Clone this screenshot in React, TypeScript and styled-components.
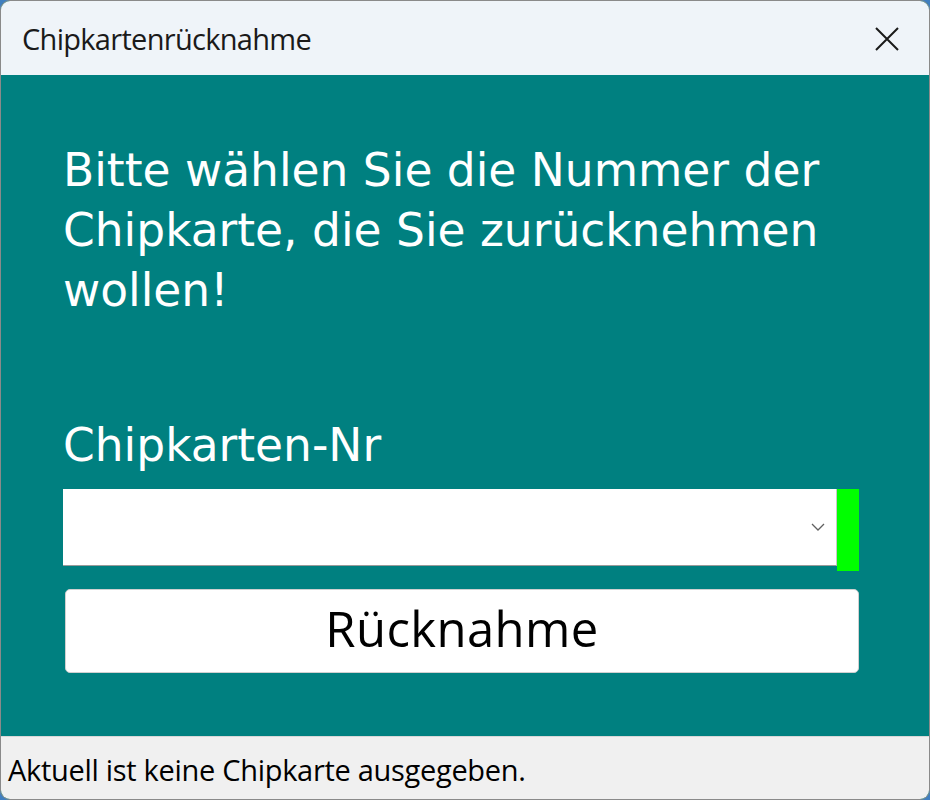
import React from 'react'
import styled, { createGlobalStyle } from 'styled-components'

const GlobalStyle = createGlobalStyle`
	html, body {
		margin: 0;
		padding: 0;
		width: 930px;
		height: 800px;
		overflow: hidden;
		background: #3f7fc0;
	}
`

function App() {
	const [selected, setSelected] = React.useState<string>('')

	return (
		<>
			<GlobalStyle />
			<Window>
				<TitleBar>
					<Title>Chipkartenrücknahme</Title>
					<CloseButton aria-label="Schließen">
						<svg width="24" height="24" viewBox="0 0 24 24">
							<path d="M1 1 L23 23 M23 1 L1 23" stroke="#1a1a1a" strokeWidth="2" fill="none" />
						</svg>
					</CloseButton>
				</TitleBar>
				<Content>
					<Prompt>Bitte wählen Sie die Nummer der Chipkarte, die Sie zurücknehmen wollen!</Prompt>
					<FieldLabel>Chipkarten-Nr</FieldLabel>
					<ComboRow>
						<Combo>
							<ComboValue>{selected}</ComboValue>
							<svg width="14" height="8" viewBox="0 0 14 8">
								<path d="M1 1 L7 7 L13 1" stroke="#606060" strokeWidth="1.3" fill="none" />
							</svg>
						</Combo>
						<StatusMark ok />
					</ComboRow>
					<ActionButton onClick={() => setSelected('')}>Rücknahme</ActionButton>
				</Content>
				<StatusBar>Aktuell ist keine Chipkarte ausgegeben.</StatusBar>
			</Window>
		</>
	)
}

const Window = styled.div`
	display: flex;
	flex-direction: column;
	width: 930px;
	height: 800px;
	box-sizing: border-box;
	border: 1px solid #8a8a8a;
	border-radius: 10px;
	overflow: hidden;
	background: #008080;
`

const TitleBar = styled.div`
	display: flex;
	align-items: center;
	justify-content: space-between;
	height: 74px;
	padding: 0 30px 0 21px;
	background: #eff4f9;
	flex-shrink: 0;
`

const Title = styled.div`
	font-family: 'Open Sans', sans-serif;
	font-size: 29px;
	color: #1a1a1a;
	letter-spacing: -0.7px;
`

const CloseButton = styled.button`
	display: flex;
	align-items: center;
	justify-content: center;
	background: transparent;
	border: none;
	padding: 0;
	margin-top: 2px;
`

const Content = styled.div`
	flex: 1;
	display: flex;
	flex-direction: column;
	padding: 66px 70px 0 62px;
	background: #008080;
	font-family: 'DejaVu Sans', sans-serif;
	color: #ffffff;
`

const Prompt = styled.div`
	font-size: 45.5px;
	line-height: 60px;
	margin-bottom: 100px;
`

const FieldLabel = styled.div`
	font-size: 45.5px;
	line-height: 50px;
	margin-bottom: 18px;
`

const ComboRow = styled.div`
	display: flex;
	align-items: flex-start;
`

const Combo = styled.div`
	flex: 1;
	display: flex;
	align-items: center;
	justify-content: space-between;
	height: 77px;
	box-sizing: border-box;
	padding: 0 11px 0 12px;
	background: #ffffff;
	border-bottom: 1px solid #9a9a9a;
	border-right: 1px solid #c8c8c8;
`

const ComboValue = styled.span`
	font-family: 'DejaVu Sans', sans-serif;
	font-size: 30px;
	color: #000;
`

const StatusMark = styled.div<{ ok?: boolean }>`
	width: 22px;
	height: 82px;
	background: ${(p) => (p.ok ? '#00ff00' : '#ff0000')};
`

const ActionButton = styled.button`
	height: 84px;
	margin: 18px 0 0 2px;
	background: #ffffff;
	border: 1px solid #d0d0d0;
	border-radius: 5px;
	font-family: 'Open Sans', sans-serif;
	font-size: 49px;
	letter-spacing: 0.4px;
	color: #000;
	padding: 0 0 6px;
`

const StatusBar = styled.div`
	height: 63px;
	flex-shrink: 0;
	box-sizing: border-box;
	display: flex;
	align-items: center;
	padding: 2px 0 0 7px;
	background: #f0f0f0;
	border-top: 1px solid #d8d8d8;
	font-family: 'Open Sans', sans-serif;
	font-size: 29px;
	letter-spacing: -0.3px;
	color: #000;
`

export default App
